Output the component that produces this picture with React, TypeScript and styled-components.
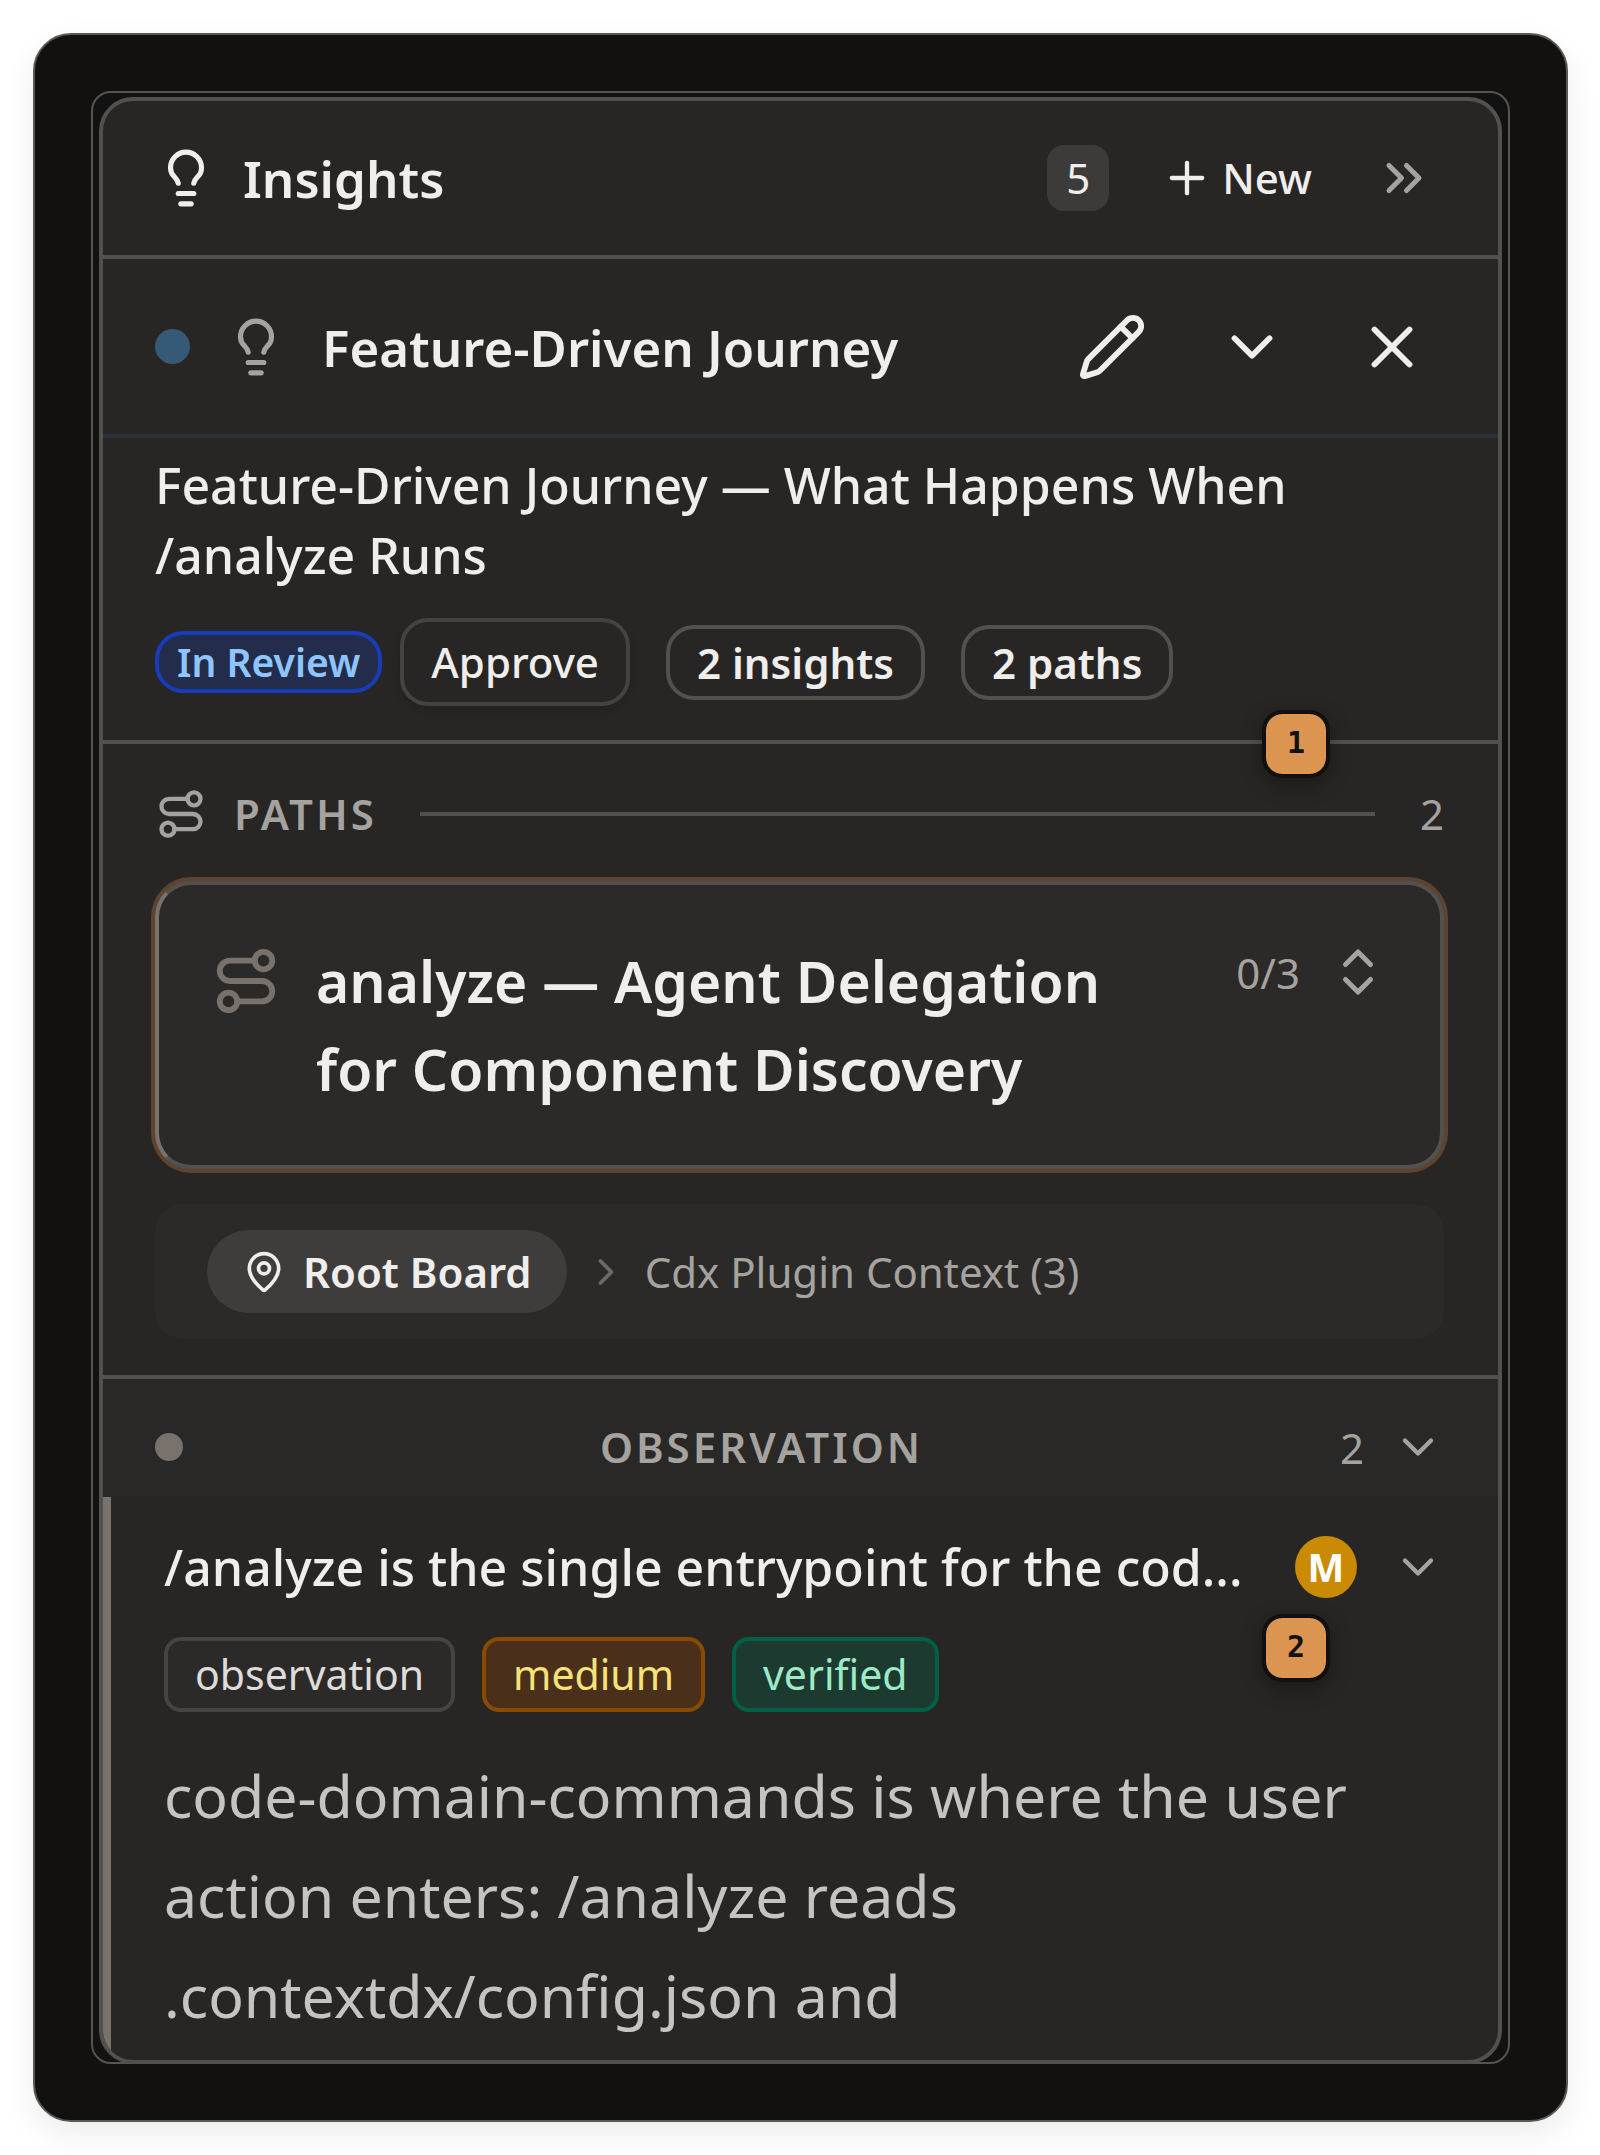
import React from "react";
import styled, { createGlobalStyle, css } from "styled-components";
import {
  ChevronDown,
  ChevronRight,
  ChevronsRight,
  ChevronsUpDown,
  Lightbulb,
  MapPin,
  Pencil,
  Plus,
  Route,
  X,
} from "lucide-react";

const color = {
  ink: "#12110f",
  panel: "#272624",
  raised: "#2b2a28",
  chip: "#3c3b39",
  line: "#53514e",
  softLine: "#444341",
  text: "#efeeec",
  body: "#c5c4c1",
  muted: "#a5a3a0",
  stone: "#79716b",
  amber: "#dc9550",
};

const GlobalStyle = createGlobalStyle`
  *, *::before, *::after { box-sizing: border-box; }
  body {
    margin: 0;
    background: #fff;
    color: ${color.text};
    font-family: "Noto Sans", "Open Sans", sans-serif;
  }
  button {
    margin: 0;
    padding: 0;
    border: 0;
    background: none;
    color: inherit;
    font: inherit;
    cursor: pointer;
  }
  h1, h2, h3, p { margin: 0; }
  svg { display: block; flex: none; }
`;

const Page = styled.main`
  padding: 33px 32px 32px 33px;
`;

const Card = styled.div`
  padding: 56px;
  border: 2px solid #5a5855;
  border-radius: 38px;
  background: ${color.ink};
  box-shadow: 0 12px 32px rgba(0, 0, 0, 0.08);
`;

const Frame = styled.div`
  padding: 4px 6px 0;
  border: 2px solid #57534e;
  border-radius: 20px;
  background: #111211;
`;

const Panel = styled.section`
  margin-bottom: -2px;
  border: 4px solid ${color.line};
  border-radius: 34px;
  background: ${color.panel};
  overflow: hidden;
`;

const Header = styled.header`
  display: flex;
  align-items: center;
  justify-content: space-between;
  height: 158px;
  padding: 0 54px 0 52px;
  border-bottom: 4px solid ${color.line};
`;

const Group = styled.div<{ $gap: number }>`
  display: flex;
  align-items: center;
  gap: ${(p) => p.$gap}px;
`;

const Title = styled.h1`
  font-size: 51px;
  font-weight: 600;
  line-height: 70px;
`;

const Total = styled.span`
  min-width: 62px;
  border-radius: 17px;
  background: ${color.chip};
  font-size: 42px;
  line-height: 66px;
  text-align: center;
`;

const NewButton = styled.button`
  display: flex;
  align-items: center;
  gap: 9px;
  padding: 0 34px;
  font-size: 42px;
  font-weight: 500;
  line-height: 70px;
`;

const IconButton = styled.button<{ $size: number; $muted?: boolean }>`
  display: grid;
  place-items: center;
  width: ${(p) => p.$size}px;
  height: ${(p) => p.$size}px;
  color: ${(p) => (p.$muted ? color.muted : color.text)};
`;

const JourneyBar = styled.div`
  display: flex;
  align-items: center;
  justify-content: space-between;
  height: 179px;
  padding: 0 54px 0 52px;
  border-bottom: 4px solid #2b3138;
`;

const Dot = styled.span<{ $size: number; $color: string }>`
  flex: none;
  width: ${(p) => p.$size}px;
  height: ${(p) => p.$size}px;
  border-radius: 50%;
  background: ${(p) => p.$color};
`;

const BulbSlot = styled.span`
  color: ${color.muted};
`;

const Summary = styled.div`
  position: relative;
  padding: 12px 54px 34px 52px;
  border-bottom: 4px solid ${color.line};
`;

const Lead = styled.p`
  font-size: 50px;
  font-weight: 500;
  line-height: 70px;
`;

const StatusRow = styled.div`
  display: flex;
  align-items: center;
  gap: 36px;
  margin-top: 28px;
`;

const pill = css`
  border: 4px solid ${color.line};
  border-radius: 28px;
  font-size: 42px;
  white-space: nowrap;
`;

const Status = styled.span`
  ${pill}
  padding: 0 18px;
  border-color: #193cb8;
  background: #232c4a;
  color: #8ec5ff;
  font-size: 39px;
  font-weight: 600;
  line-height: 54px;
`;

const ApproveButton = styled.button`
  ${pill}
  padding: 0 27px;
  border: 4px solid ${color.softLine};
  border-radius: 28px;
  font-size: 42px;
  font-weight: 500;
  line-height: 80px;
  box-shadow: 0 4px 8px rgba(0, 0, 0, 0.12);
`;

const Count = styled.span`
  ${pill}
  padding: 0 27px;
  font-weight: 600;
  line-height: 67px;
`;

const Callout = styled.span<{ $edge: "bottom" | "top" }>`
  position: absolute;
  right: 168px;
  ${(p) => (p.$edge === "bottom" ? "bottom: -38px;" : "top: 117px;")}
  z-index: 1;
  width: 68px;
  height: 68px;
  border: 4px solid ${color.ink};
  border-radius: 20px;
  background: ${color.amber};
  background-clip: padding-box;
  box-shadow: 0 6px 20px rgba(0, 0, 0, 0.35);
  color: ${color.ink};
  font-family: "DejaVu Sans Mono", monospace;
  font-size: 30px;
  font-weight: 700;
  line-height: 58px;
  text-align: center;
`;

const Paths = styled.section`
  padding: 35px 54px 36px 52px;
  border-bottom: 4px solid ${color.line};
`;

const PathsHead = styled.div`
  display: flex;
  align-items: center;
  gap: 27px;
  color: ${color.muted};
  font-size: 42px;
  line-height: 70px;
`;

const Caps = styled.h2`
  color: ${color.muted};
  font-size: 42px;
  font-weight: 600;
  letter-spacing: 3px;
  line-height: 70px;
  text-transform: uppercase;
`;

const Rule = styled.span`
  flex: 1;
  height: 4px;
  margin: 0 18px 0 16px;
  background: ${color.line};
`;

const PathCard = styled.button`
  display: flex;
  align-items: flex-start;
  width: 100%;
  margin-top: 32px;
  padding: 52px;
  border: 4px solid ${color.line};
  border-left-color: ${color.stone};
  border-radius: 36px;
  background: ${color.raised};
  box-shadow: 0 0 0 4px #5c4430;
  text-align: left;
`;

const PathIcon = styled.span`
  display: grid;
  align-items: center;
  height: 88px;
  color: ${color.stone};
`;

const PathTitle = styled.span`
  flex: 1;
  padding: 0 44px 0 35px;
  font-size: 57px;
  font-weight: 600;
  line-height: 88px;
`;

const Progress = styled.span`
  display: flex;
  align-items: center;
  gap: 28px;
  height: 70px;
  color: ${color.muted};
  font-size: 42px;
`;

const Crumbs = styled.nav`
  display: flex;
  align-items: center;
  gap: 17px;
  margin-top: 35px;
  padding: 26px 52px;
  border-radius: 28px;
  background: ${color.raised};
  color: #6d6b68;
`;

const CurrentCrumb = styled.button`
  display: flex;
  align-items: center;
  gap: 17px;
  padding: 0 35px;
  border-radius: 42px;
  background: #3e3d3b;
  color: ${color.text};
  font-size: 42px;
  font-weight: 600;
  line-height: 83px;
`;

const Crumb = styled.a`
  color: ${color.muted};
  font-size: 42px;
  line-height: 83px;
  text-decoration: none;
`;

const GroupHead = styled.button`
  display: flex;
  align-items: center;
  justify-content: space-between;
  width: 100%;
  height: 118px;
  padding: 18px 54px 0 52px;
  background: #292826;
  color: ${color.muted};
  font-size: 42px;
`;

const Insight = styled.article`
  position: relative;
  padding: 35px 54px 15px 53px;
  border-left: 8px solid ${color.stone};
`;

const InsightHead = styled.div`
  display: flex;
  align-items: center;
  height: 70px;
`;

const InsightTitle = styled.h3`
  flex: 1;
  min-width: 0;
  font-size: 50px;
  font-weight: 500;
  line-height: 70px;
`;

const Avatar = styled.span`
  width: 62px;
  height: 62px;
  margin: 0 35px 0 27px;
  border-radius: 50%;
  background: #ca8a04;
  color: #fff;
  font-size: 39px;
  font-weight: 700;
  line-height: 62px;
  text-align: center;
`;

const Tags = styled.div`
  display: flex;
  gap: 27px;
  margin-top: 35px;
`;

const tones = {
  neutral: ["#454442", "#2b2a28", "#dddcda"],
  medium: ["#894b00", "#4a301a", "#f7e27a"],
  verified: ["#006045", "#1c3a30", "#9eeac8"],
};

const Tag = styled.span<{ $tone: keyof typeof tones }>`
  padding: 0 27px;
  border: 4px solid ${(p) => tones[p.$tone][0]};
  border-radius: 17px;
  background: ${(p) => tones[p.$tone][1]};
  color: ${(p) => tones[p.$tone][2]};
  font-size: 41px;
  line-height: 67px;
`;

const Body = styled.p`
  margin-top: 33px;
  color: ${color.body};
  font-size: 59px;
  line-height: 100px;
`;

const FilePath = styled.span`
  white-space: nowrap;
`;

export default function App() {
  return (
    <Page>
      <GlobalStyle />
      <Card>
        <Frame>
          <Panel>
            <Header>
              <Group $gap={26}>
                <Lightbulb size={62} />
                <Title>Insights</Title>
              </Group>
              <Group $gap={18}>
                <Total>5</Total>
                <NewButton>
                  <Plus size={52} />
                  New
                </NewButton>
                <IconButton $size={80} $muted aria-label="Collapse panel">
                  <ChevronsRight size={60} />
                </IconButton>
              </Group>
            </Header>

            <JourneyBar>
              <Group $gap={35}>
                <Dot $size={35} $color="#365a76" />
                <BulbSlot>
                  <Lightbulb size={62} />
                </BulbSlot>
                <Title as="h2">Feature-Driven Journey</Title>
              </Group>
              <Group $gap={35}>
                <IconButton $size={105} aria-label="Edit journey">
                  <Pencil size={70} />
                </IconButton>
                <IconButton $size={105} aria-label="Choose journey">
                  <ChevronDown size={70} />
                </IconButton>
                <IconButton $size={105} aria-label="Close journey">
                  <X size={70} />
                </IconButton>
              </Group>
            </JourneyBar>

            <Summary>
              <Lead>Feature-Driven Journey — What Happens When /analyze Runs</Lead>
              <StatusRow>
                <Group $gap={18}>
                  <Status>In Review</Status>
                  <ApproveButton>Approve</ApproveButton>
                </Group>
                <Count>2 insights</Count>
                <Count>2 paths</Count>
              </StatusRow>
              <Callout $edge="bottom">1</Callout>
            </Summary>

            <Paths>
              <PathsHead>
                <Route size={52} />
                <Caps>Paths</Caps>
                <Rule />
                <span>2</span>
              </PathsHead>
              <PathCard>
                <PathIcon>
                  <Route size={70} />
                </PathIcon>
                <PathTitle>analyze — Agent Delegation for Component Discovery</PathTitle>
                <Progress>
                  0/3
                  <ChevronsUpDown size={60} />
                </Progress>
              </PathCard>
              <Crumbs aria-label="Boards">
                <CurrentCrumb>
                  <MapPin size={44} />
                  Root Board
                </CurrentCrumb>
                <ChevronRight size={44} />
                <Crumb href="#context">Cdx Plugin Context (3)</Crumb>
              </Crumbs>
            </Paths>

            <GroupHead aria-expanded="true">
              <Dot $size={28} $color={color.stone} />
              <Caps as="span">Observation</Caps>
              <Group $gap={28}>
                2
                <ChevronDown size={52} />
              </Group>
            </GroupHead>

            <Insight>
              <InsightHead>
                <InsightTitle>/analyze is the single entrypoint for the cod...</InsightTitle>
                <Avatar>M</Avatar>
                <IconButton $size={52} $muted aria-label="Collapse insight">
                  <ChevronDown size={52} />
                </IconButton>
              </InsightHead>
              <Tags>
                <Tag $tone="neutral">observation</Tag>
                <Tag $tone="medium">medium</Tag>
                <Tag $tone="verified">verified</Tag>
              </Tags>
              <Body>
                code-domain-commands is where the user action enters: /analyze reads{" "}
                <FilePath>.contextdx/config.json</FilePath> and
              </Body>
              <Callout $edge="top">2</Callout>
            </Insight>
          </Panel>
        </Frame>
      </Card>
    </Page>
  );
}
